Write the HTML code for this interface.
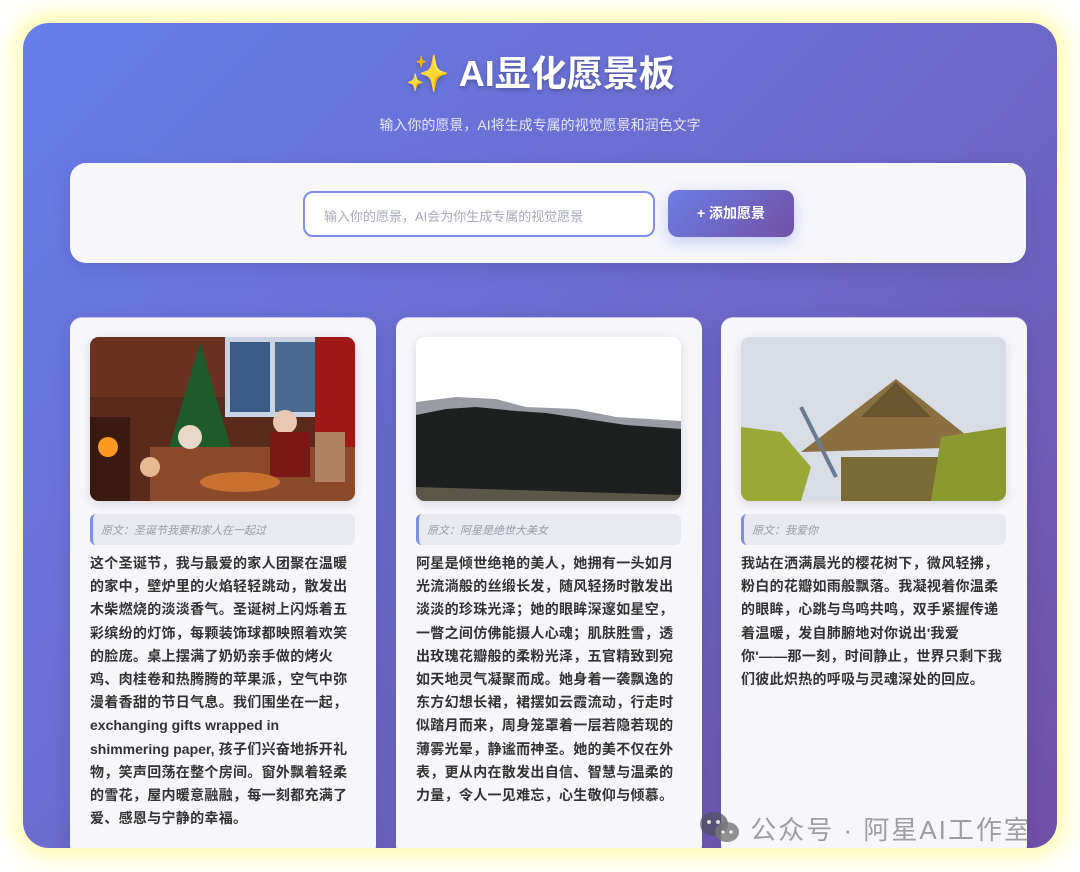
<!DOCTYPE html>
<html><head><meta charset="utf-8"><style>
*{margin:0;padding:0;box-sizing:border-box}
html,body{width:1080px;height:872px;overflow:hidden}
body{background:#fff;font-family:"Liberation Sans","Noto Sans CJK SC",sans-serif;position:relative}
.glow{position:absolute;left:23px;top:23px;width:1034px;height:825px;border-radius:26px;box-shadow:0 0 22px 10px rgba(255,250,170,.9)}
.wrap{position:absolute;left:23px;top:23px;width:1034px;height:825px;border-radius:26px;overflow:hidden;background:linear-gradient(135deg,#667eea 0%,#6d68c8 55%,#7050a8 100%)}
h1{position:absolute;top:29px;left:0;width:100%;text-align:center;color:#fff;font-size:36px;line-height:44px;font-weight:700;text-shadow:0 2px 4px rgba(0,0,0,.25)}
.sub{position:absolute;top:92px;left:0;width:100%;text-align:center;color:rgba(255,255,255,.82);font-size:14px}
.panel{position:absolute;left:47px;top:140px;width:956px;height:100px;background:#f6f6fb;border-radius:16px;box-shadow:0 6px 20px rgba(0,0,0,.1)}
.inp{position:absolute;left:233px;top:28px;width:352px;height:46px;border:2px solid #7d8ee9;border-radius:10px;background:#fff;color:#a9abb8;font-size:13px;padding:13px 0 0 19px}
.btn{position:absolute;left:598px;top:27px;width:126px;height:47px;border-radius:10px;background:linear-gradient(135deg,#6a7fe3,#7250a6);color:#fff;font-size:14px;font-weight:700;text-align:center;line-height:47px;box-shadow:0 5px 14px rgba(102,126,234,.35)}
.card{position:absolute;top:294px;width:306px;height:540px;background:#f6f6fb;border-radius:12px;border-top:1px solid #c8c0f0;box-shadow:0 6px 20px rgba(0,0,0,.12)}
.img{position:absolute;left:20px;top:19px;width:265px;height:164px;border-radius:9px;overflow:hidden;box-shadow:0 3px 10px rgba(0,0,0,.12)}
.q{position:absolute;left:20px;top:196px;width:265px;height:31px;background:#e9e9f0;border-left:3px solid #7d8ee9;border-radius:6px;color:#9a9aa8;font-size:11px;font-style:italic;padding:8px 0 0 8px}
.t{position:absolute;left:20px;top:234px;width:275px;color:#333;font-size:14px;font-weight:700;line-height:23.2px;letter-spacing:.3px;white-space:nowrap}
.t span{letter-spacing:0}
.dot{position:absolute;left:20px;top:530px;width:26px;height:26px;border-radius:50%;background:#3cb371}
.wm{position:absolute;left:699px;top:810px;color:rgba(110,110,110,.65);font-size:26px;letter-spacing:2px;white-space:nowrap}
</style></head><body>
<div class="glow"></div>
<div class="wrap">
<h1>✨ AI显化愿景板</h1>
<div class="sub">输入你的愿景，AI将生成专属的视觉愿景和润色文字</div>
<div class="panel"><div class="inp">输入你的愿景，AI会为你生成专属的视觉愿景</div><div class="btn">+ 添加愿景</div></div>

<div class="card" style="left:47px">
<div class="img"><svg width="265" height="164"><rect width="265" height="164" fill="#5a2a1c"/><rect x="0" y="0" width="265" height="60" fill="#6b3222"/><rect x="135" y="0" width="100" height="80" fill="#c8d4e4"/><rect x="140" y="5" width="40" height="70" fill="#3a5a88"/><rect x="185" y="5" width="45" height="70" fill="#4a6890"/><rect x="225" y="0" width="40" height="110" fill="#a01818"/><polygon points="110,5 75,125 145,125" fill="#1f5a2a"/><rect x="0" y="80" width="40" height="84" fill="#3a1a10"/><circle cx="18" cy="110" r="10" fill="#ff9a20"/><rect x="60" y="110" width="205" height="54" fill="#8a4a2a"/><circle cx="100" cy="100" r="12" fill="#e8d8c8"/><circle cx="195" cy="85" r="12" fill="#e8c8b0"/><rect x="180" y="95" width="40" height="45" fill="#7a1818"/><rect x="225" y="95" width="30" height="50" fill="#b08060"/><ellipse cx="150" cy="145" rx="40" ry="10" fill="#c87030"/><circle cx="60" cy="130" r="10" fill="#e8b890"/></svg></div>
<div class="q">原文：圣诞节我要和家人在一起过</div>
<div class="t">这个圣诞节，我与最爱的家人团聚在温暖<br>的家中，壁炉里的火焰轻轻跳动，散发出<br>木柴燃烧的淡淡香气。圣诞树上闪烁着五<br>彩缤纷的灯饰，每颗装饰球都映照着欢笑<br>的脸庞。桌上摆满了奶奶亲手做的烤火<br>鸡、肉桂卷和热腾腾的苹果派，空气中弥<br>漫着香甜的节日气息。我们围坐在一起，<br><span>exchanging gifts wrapped in</span><br><span>shimmering paper,</span> 孩子们兴奋地拆开礼<br>物，笑声回荡在整个房间。窗外飘着轻柔<br>的雪花，屋内暖意融融，每一刻都充满了<br>爱、感恩与宁静的幸福。</div>
<div class="dot"></div>
</div>

<div class="card" style="left:373px">
<div class="img"><svg width="265" height="164"><rect width="265" height="164" fill="#fff"/><polygon points="0,65 40,60 80,62 110,70 160,72 200,80 265,84 265,164 0,164" fill="#9a9ca4"/><polygon points="0,78 30,72 60,70 100,74 130,76 170,82 210,88 265,92 265,164 0,164" fill="#1e1f1f"/><polygon points="0,150 265,158 265,164 0,164" fill="#5a5648"/></svg></div>
<div class="q">原文：阿星是绝世大美女</div>
<div class="t">阿星是倾世绝艳的美人，她拥有一头如月<br>光流淌般的丝缎长发，随风轻扬时散发出<br>淡淡的珍珠光泽；她的眼眸深邃如星空，<br>一瞥之间仿佛能摄人心魂；肌肤胜雪，透<br>出玫瑰花瓣般的柔粉光泽，五官精致到宛<br>如天地灵气凝聚而成。她身着一袭飘逸的<br>东方幻想长裙，裙摆如云霞流动，行走时<br>似踏月而来，周身笼罩着一层若隐若现的<br>薄雾光晕，静谧而神圣。她的美不仅在外<br>表，更从内在散发出自信、智慧与温柔的<br>力量，令人一见难忘，心生敬仰与倾慕。</div>
<div class="dot"></div>
</div>

<div class="card" style="left:698px">
<div class="img"><svg width="265" height="164"><rect width="265" height="164" fill="#d8dce4"/><polygon points="155,42 240,110 60,115" fill="#8a7040"/><polygon points="155,45 190,80 120,80" fill="#6a5430"/><rect x="100" y="120" width="130" height="44" fill="#7a6a38"/><polygon points="0,90 40,95 70,130 60,164 0,164" fill="#9aa838"/><polygon points="200,100 265,90 265,164 190,164" fill="#8a9a30"/><line x1="60" y1="70" x2="95" y2="140" stroke="#6a7a90" stroke-width="4"/></svg></div>
<div class="q">原文：我爱你</div>
<div class="t">我站在洒满晨光的樱花树下，微风轻拂，<br>粉白的花瓣如雨般飘落。我凝视着你温柔<br>的眼眸，心跳与鸟鸣共鸣，双手紧握传递<br>着温暖，发自肺腑地对你说出'我爱<br>你'——那一刻，时间静止，世界只剩下我<br>们彼此炽热的呼吸与灵魂深处的回应。</div>
<div class="dot"></div>
</div>
</div>
<div class="wm"><svg width="42" height="34" style="vertical-align:-5px"><ellipse cx="15" cy="14" rx="14" ry="12" fill="rgba(80,80,90,.7)"/><ellipse cx="28" cy="22" rx="12" ry="10" fill="rgba(120,120,120,.8)"/><circle cx="10" cy="12" r="2" fill="#ddd"/><circle cx="19" cy="12" r="2" fill="#ddd"/><circle cx="24" cy="22" r="1.6" fill="#eee"/><circle cx="32" cy="22" r="1.6" fill="#eee"/></svg> 公众号 · 阿星AI工作室</div>
</body></html>
